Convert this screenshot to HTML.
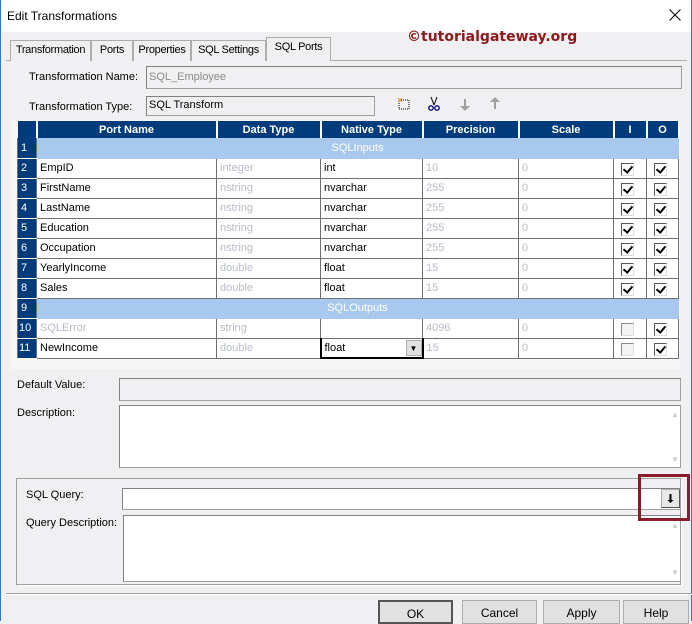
<!DOCTYPE html><html><head><style>
*{box-sizing:border-box;margin:0;padding:0}
body{width:692px;height:621px;overflow:hidden;background:#f0eff2;font-family:"Liberation Sans",Arial,sans-serif;font-size:11px;color:#000;position:relative}
.a{position:absolute;white-space:nowrap}
.box{position:absolute;border:1px solid #a0a0a0;border-top-color:#828282;border-left-color:#828282;background:#fff}
.tab{position:absolute;top:40px;height:21px;border:1px solid #adadad;border-bottom:none;background:#f0eff2;font-size:11px;padding:3px 0 0 0;text-align:center;white-space:nowrap;letter-spacing:-0.3px}
table{position:absolute;left:17px;top:121px;border-collapse:collapse;table-layout:fixed}
td{height:20px;border:1px solid #6f6f6f;border-top:none;background:#fff;padding:0 3px;font-size:11px;white-space:nowrap;overflow:hidden}
th{height:17px;background:#003c7b;color:#fff;font-weight:bold;font-size:11px;border-right:2px solid #fff;text-align:center}
td.n{background:#003c7b;color:#fff;padding-left:3px;border-color:#fff #6f6f6f #fff #6f6f6f;border-bottom:1px solid #fff}
td.g{background:#a8c8ee;color:#fff;text-align:center;border-color:#a8c8ee}
.d{color:#b8bcc8}
.cb{display:inline-block;width:13px;height:13px;border:1px solid #5a5a5a;border-right-color:#ddd;border-bottom-color:#ddd;background:#fff;position:relative;vertical-align:middle;margin-left:4px;margin-top:2px}
.cb.c::after{content:"";position:absolute;left:3px;top:0px;width:4px;height:7px;border:solid #000;border-width:0 2px 2px 0;transform:rotate(40deg)}
.cb.x{border-color:#8a8a8a #ddd #ddd #8a8a8a;background:#f4f4f4}
.btn{position:absolute;top:600px;height:24px;border:1px solid #adadad;background:#e1e1e1;text-align:center;font-size:12px;padding-top:5px}
</style></head><body>
<div class="a" style="left:0;top:0;width:692px;height:32px;background:#fff"></div>
<div class="a" style="left:0;top:0;width:1px;height:621px;background:#2b79d0"></div>
<div class="a" style="left:691px;top:0;width:1px;height:621px;background:#2b79d0"></div>
<div class="a" style="left:7px;top:9px;font-size:12px">Edit Transformations</div>
<svg class="a" style="left:669px;top:9px" width="12" height="12"><path d="M0.5 0.5l11 11M11.5 0.5l-11 11" stroke="#000" stroke-width="1"/></svg>
<div class="a" style="left:407px;top:29px;font-size:14px;font-weight:bold;color:#8b1a1a;font-family:'DejaVu Sans',sans-serif">©tutorialgateway.org</div>
<div class="a" style="left:6px;top:60px;width:681px;height:1px;background:#adadad"></div>
<div class="tab" style="left:10px;width:81px">Transformation</div>
<div class="tab" style="left:91px;width:42px">Ports</div>
<div class="tab" style="left:133px;width:58px">Properties</div>
<div class="tab" style="left:191px;width:75px">SQL Settings</div>
<div class="tab" style="left:266px;width:65px;top:37px;height:24px;background:#f0eff2;z-index:2">SQL Ports</div>
<div class="a" style="left:29px;top:71px;font-size:11px">Transformation Name:</div>
<div class="box" style="left:146px;top:66px;width:536px;height:23px;background:#f0eff2;color:#8a8a8a;font-size:11px;padding:4px 2px">SQL_Employee</div>
<div class="a" style="left:29px;top:101px;font-size:11px">Transformation Type:</div>
<div class="box" style="left:146px;top:96px;width:229px;height:20px;background:#f0eff2;font-size:11px;padding:2px 2px">SQL Transform</div>
<svg class="a" style="left:396px;top:96px" width="110" height="16">
<rect x="3" y="4" width="10" height="9" fill="none" stroke="#000" stroke-dasharray="1 1"/><path d="M2 2l4 4M6 2l-4 4" stroke="#d9a040"/>
<path d="M35 1l3 8M41 1l-3 8" stroke="#000"/><circle cx="35" cy="12" r="2.2" fill="none" stroke="#00007a" stroke-width="1.3"/><circle cx="41" cy="12" r="2.2" fill="none" stroke="#00007a" stroke-width="1.3"/>
<path d="M68 3v7h-4l5 5 5-5h-4V3z" fill="#a0a0a0"/>
<path d="M98 13V6h-4l5-5 5 5h-4v7z" fill="#a0a0a0"/>
</svg>
<div class="a" style="left:11px;top:120px;width:669px;height:249px;background:#f7f7f8"></div>
<table>
<colgroup><col style="width:19px"><col style="width:180px"><col style="width:104px"><col style="width:102px"><col style="width:96px"><col style="width:95px"><col style="width:33px"><col style="width:32px"></colgroup>
<tr><th style="background:#003c7b"></th><th>Port Name</th><th>Data Type</th><th>Native Type</th><th>Precision</th><th>Scale</th><th>I</th><th>O</th></tr>
<tr><td class="n">1</td><td class="g" colspan="7">SQLInputs</td></tr>
<tr><td class="n">2</td><td>EmpID</td><td class="d">integer</td><td>int</td><td class="d">10</td><td class="d">0</td><td><span class="cb c"></span></td><td><span class="cb c"></span></td></tr>
<tr><td class="n">3</td><td>FirstName</td><td class="d">nstring</td><td>nvarchar</td><td class="d">255</td><td class="d">0</td><td><span class="cb c"></span></td><td><span class="cb c"></span></td></tr>
<tr><td class="n">4</td><td>LastName</td><td class="d">nstring</td><td>nvarchar</td><td class="d">255</td><td class="d">0</td><td><span class="cb c"></span></td><td><span class="cb c"></span></td></tr>
<tr><td class="n">5</td><td>Education</td><td class="d">nstring</td><td>nvarchar</td><td class="d">255</td><td class="d">0</td><td><span class="cb c"></span></td><td><span class="cb c"></span></td></tr>
<tr><td class="n">6</td><td>Occupation</td><td class="d">nstring</td><td>nvarchar</td><td class="d">255</td><td class="d">0</td><td><span class="cb c"></span></td><td><span class="cb c"></span></td></tr>
<tr><td class="n">7</td><td>YearlyIncome</td><td class="d">double</td><td>float</td><td class="d">15</td><td class="d">0</td><td><span class="cb c"></span></td><td><span class="cb c"></span></td></tr>
<tr><td class="n">8</td><td>Sales</td><td class="d">double</td><td>float</td><td class="d">15</td><td class="d">0</td><td><span class="cb c"></span></td><td><span class="cb c"></span></td></tr>
<tr><td class="n">9</td><td class="g" colspan="7">SQLOutputs</td></tr>
<tr><td class="n" style="padding-left:1px">10</td><td class="d">SQLError</td><td class="d">string</td><td></td><td class="d">4096</td><td class="d">0</td><td><span class="cb x"></span></td><td><span class="cb c"></span></td></tr>
<tr><td class="n" style="padding-left:1px">11</td><td>NewIncome</td><td class="d">double</td><td style="border:2px solid #000;border-top:1px solid #000;position:relative">float<span style="position:absolute;right:0;top:1px;width:16px;height:16px;background:#e1e1e1;border:1px solid #adadad;font-size:8px;text-align:center;line-height:15px">▼</span></td><td class="d">15</td><td class="d">0</td><td><span class="cb x"></span></td><td><span class="cb c"></span></td></tr>
</table>
<div class="a" style="left:17px;top:379px;font-size:11px">Default Value:</div>
<div class="box" style="left:119px;top:378px;width:562px;height:23px;background:#f0eff2"></div>
<div class="a" style="left:17px;top:407px;font-size:11px">Description:</div>
<div class="box" style="left:119px;top:405px;width:562px;height:63px"></div>
<div class="a" style="left:671px;top:410px;color:#ccc;font-size:8px">▲</div><div class="a" style="left:671px;top:455px;color:#ccc;font-size:8px">▼</div>
<div class="a" style="left:16px;top:478px;width:666px;height:108px;border:1px solid #a0a0a0;border-right-color:#fff;border-bottom-color:#fff;box-shadow:inset -1px -1px 0 #a0a0a0"></div>
<div class="a" style="left:26px;top:489px;font-size:11px">SQL Query:</div>
<div class="box" style="left:122px;top:488px;width:559px;height:22px"></div>
<div class="a" style="left:661px;top:489px;width:19px;height:19px;background:#e8e8e8;border:1px solid #adadad;border-right-color:#555;border-bottom-color:#555"><svg width="17" height="17"><path d="M8.5 4v7" stroke="#000" stroke-width="2"/><path d="M5.5 10h6l-3 3z" fill="#000"/></svg></div>
<div class="a" style="left:26px;top:517px;font-size:11px">Query Description:</div>
<div class="box" style="left:123px;top:515px;width:558px;height:67px"></div>
<div class="a" style="left:671px;top:521px;color:#ccc;font-size:8px">▲</div><div class="a" style="left:671px;top:568px;color:#ccc;font-size:8px">▼</div>
<div class="a" style="left:638px;top:474px;width:52px;height:47px;border:3px solid #8b1a2b"></div>
<div class="a" style="left:6px;top:593px;width:686px;height:2px;border-top:1px solid #a0a0a0;border-bottom:1px solid #fff"></div>
<div class="btn" style="left:378px;width:75px;border:2px solid #555">OK</div>
<div class="btn" style="left:462px;width:75px">Cancel</div>
<div class="btn" style="left:543px;width:77px">Apply</div>
<div class="btn" style="left:623px;width:66px">Help</div>
</body></html>
